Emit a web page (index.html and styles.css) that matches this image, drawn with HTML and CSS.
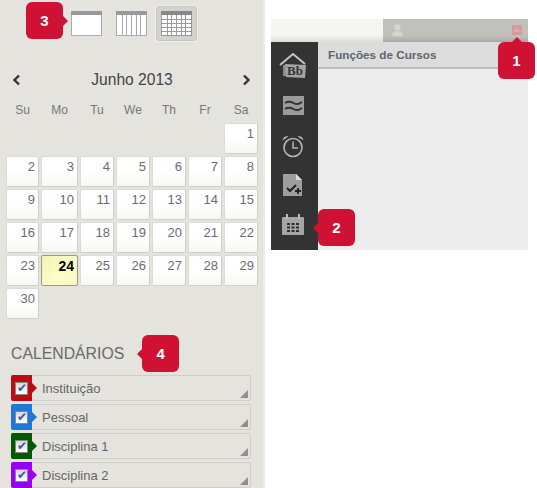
FILE: index.html
```html
<!DOCTYPE html>
<html lang="en">
<head>
    <meta charset="UTF-8">
    <title>Calendário</title>
    <link rel="stylesheet" href="styles.css">
</head>
<body>
    <aside class="panel">
        <div class="views">
            <span class="callout callout-3">3</span>
            <button class="view">
                <svg width="31" height="25" viewBox="0 0 31 25"><rect x=".5" y=".5" width="30" height="24" fill="#fff" stroke="#aaa"/><rect width="31" height="4" fill="#999"/></svg>
            </button>
            <button class="view">
                <svg width="31" height="25" viewBox="0 0 31 25"><rect x=".5" y=".5" width="30" height="24" fill="#fff" stroke="#aaa"/><rect width="31" height="4" fill="#999"/><path d="M6.500 4v20M10.500 4v20M15.500 4v20M20.500 4v20M24.500 4v20" stroke="#aaa" fill="none"/></svg>
            </button>
            <button class="view view-active">
                <svg width="31" height="25" viewBox="0 0 31 25"><rect x=".5" y=".5" width="30" height="24" fill="#fff" stroke="#999"/><rect width="31" height="4" fill="#888"/><path d="M6.500 4v20M10.500 4v20M15.500 4v20M20.500 4v20M24.500 4v20M0 8.500h31M0 12.500h31M0 16.500h31M0 20.500h31" stroke="#999" fill="none"/></svg>
            </button>
        </div>

        <div class="month-nav">
            <svg width="9" height="12" viewBox="0 0 9 12"><path d="M7 1.500 2.500 6 7 10.500" fill="none" stroke="#333" stroke-width="2.400"/></svg>
            <span class="month-title">Junho 2013</span>
            <svg width="9" height="12" viewBox="0 0 9 12"><path d="M2 1.500 6.500 6 2 10.500" fill="none" stroke="#333" stroke-width="2.400"/></svg>
        </div>

        <div class="weekdays">
            <span>Su</span><span>Mo</span><span>Tu</span><span>We</span><span>Th</span><span>Fr</span><span>Sa</span>
        </div>

        <div class="month-grid">
            <div class="day day-first">1</div>
            <div class="day">2</div><div class="day">3</div><div class="day">4</div><div class="day">5</div><div class="day">6</div><div class="day">7</div><div class="day">8</div>
            <div class="day">9</div><div class="day">10</div><div class="day">11</div><div class="day">12</div><div class="day">13</div><div class="day">14</div><div class="day">15</div>
            <div class="day">16</div><div class="day">17</div><div class="day">18</div><div class="day">19</div><div class="day">20</div><div class="day">21</div><div class="day">22</div>
            <div class="day">23</div><div class="day day-today">24</div><div class="day">25</div><div class="day">26</div><div class="day">27</div><div class="day">28</div><div class="day">29</div>
            <div class="day">30</div>
        </div>

        <div class="cal-heading">
            <h2>CALENDÁRIOS</h2>
            <span class="callout callout-4">4</span>
        </div>

        <ul class="cal-list">
            <li class="cal-item"><span class="swatch swatch-red"><span class="check">✔</span></span>Instituição</li>
            <li class="cal-item"><span class="swatch swatch-blue"><span class="check">✔</span></span>Pessoal</li>
            <li class="cal-item"><span class="swatch swatch-green"><span class="check">✔</span></span>Disciplina 1</li>
            <li class="cal-item"><span class="swatch swatch-purple"><span class="check">✔</span></span>Disciplina 2</li>
        </ul>
    </aside>

    <main class="app">
        <div class="topbar">
            <div class="topbar-left"></div>
            <div class="topbar-right">
                <svg width="13" height="14" viewBox="0 0 14 16"><circle cx="7" cy="5" r="3.600" fill="#d6d5d0"/><path d="M1 15v-2.500C1 10.500 4 9.500 7 9.500s6 1 6 3V15z" fill="#d6d5d0"/></svg>
                <span class="close-box"></span>
            </div>
        </div>
        <div class="app-body">
            <nav class="rail">
                <svg width="28" height="26" viewBox="0 0 28 26"><path d="M1 12 14 1l12 10" fill="none" stroke="#c4c4c4" stroke-width="2"/><path d="M4 12v11h3V12z" fill="#8a8a8a"/><path d="M6 11l21 1-1 13-19-1z" fill="#a5a5a5"/><text x="8" y="22" class="bb-text">Bb</text></svg>
                <svg width="21" height="19" viewBox="0 0 21 19"><rect width="21" height="19" fill="#9b9b9b"/><path d="M2 7c3-2 5-2 8.500 0s5.500 1 8.500-1M2 13c3-2 5-2 8.500 0s5.500 1 8.500-1" fill="none" stroke="#333" stroke-width="2"/></svg>
                <svg class="rail-alarm" width="24" height="26" viewBox="0 0 24 26"><circle cx="12" cy="15.500" r="9" fill="#333" stroke="#b5b5b5" stroke-width="1.600"/><path d="M12 9.500v6.500h5" fill="none" stroke="#b5b5b5" stroke-width="1.500"/><path d="M1.500 8.500C2 5 5 3.500 7.500 4.500zM22.500 8.500C22 5 19 3.500 16.500 4.500z" fill="#b5b5b5"/></svg>
                <svg width="20" height="24" viewBox="0 0 20 24"><path d="M0 1h13l6 6v16H0z" fill="#9e9e9e"/><path d="M13 1v6h6z" fill="#ddd"/><path d="M4 15l3 3 6-6" fill="none" stroke="#222" stroke-width="2"/><path d="M15 15v6M12 18h6" stroke="#222" stroke-width="1.800"/></svg>
                <svg width="22" height="21" viewBox="0 0 22 21"><rect y="3" width="22" height="18" rx="1" fill="#a5a5a5"/><path d="M5 0v5M17 0v5" stroke="#bbb" stroke-width="2"/><path d="M5 9h3v2H5zM9.500 9h3v2h-3zM14 9h3v2h-3zM5 12.500h3v2H5zM9.500 12.500h3v2h-3zM14 12.500h3v2h-3zM5 16h3v2H5zM9.500 16h3v2h-3zM14 16h3v2h-3z" fill="#2e2e2e"/></svg>
            </nav>
            <section class="content">
                <header class="content-head">Funções de Cursos</header>
            </section>
        </div>
        <span class="callout callout-1">1</span>
        <span class="callout callout-2">2</span>
    </main>
</body>
</html>
```

FILE: styles.css
```css
* {
    box-sizing: border-box;
}

html,
body {
    height: 488px;
    overflow: hidden;
}

body {
    margin: 0;
    display: flex;
    font-family: "Liberation Sans", Arial, sans-serif;
    background-color: #fff;
    color: #666;
}

.panel {
    position: relative;
    width: 265px;
    height: 488px;
    background-color: #e4e3de;
    border-right: 2px solid #ecebe7;
    padding: 6px 0 0 6px;
}

.views {
    display: flex;
    gap: 4px;
    height: 35px;
    margin-left: 60px;
}

.view {
    width: 41px;
    height: 35px;
    padding: 0;
    border: 0;
    background: none;
    display: flex;
    align-items: center;
    justify-content: center;
}

.view-active {
    background-color: #d3d2cc;
    border: 1px solid #c8c7c1;
    border-radius: 3px;
    box-shadow: 0 0 0 1px #eeede9;
}

.month-nav {
    display: flex;
    align-items: center;
    justify-content: space-between;
    width: 246px;
    height: 20px;
    margin-top: 29px;
    padding: 0 1px 0 6px;
}

.month-title {
    font-size: 15.6px;
    color: #444;
    margin-left: 1px;
}

.weekdays {
    display: grid;
    grid-template-columns: 33px 37px repeat(5, 34px);
    gap: 2px;
    margin-top: 12px;
    font-size: 12px;
    line-height: 16px;
    color: #777;
    text-align: center;
}

.month-grid {
    display: grid;
    grid-template-columns: 33px 37px repeat(5, 34px);
    grid-auto-rows: 31px;
    gap: 2px;
    margin-top: 5px;
}

.day {
    background: linear-gradient(#fff 50%, #f6f6f3);
    border: 1px solid #cfcec8;
    border-top-color: #dcdbd6;
    border-left-color: #dcdbd6;
    border-radius: 2px;
    padding: 2px 3px 0 0;
    font-size: 13px;
    line-height: 16px;
    text-align: right;
    color: #6c6a72;
}

.day-first {
    grid-column: 7;
}

.day-today {
    background: linear-gradient(135deg, #f2f2b8, #fdfdc8 60%, #f8f8c0);
    border-color: #9a9a80;
    font-size: 14px;
    font-weight: bold;
    color: #000;
}

.cal-heading {
    display: flex;
    align-items: center;
    height: 20px;
    margin: 24px 0 0 5px;
}

.cal-heading h2 {
    margin: 0;
    padding-top: 1px;
    font-size: 15.8px;
    font-weight: normal;
    color: #6a6a6a;
}

.cal-list {
    list-style: none;
    margin: 12px 0 0 5px;
    padding: 0;
    width: 240px;
}

.cal-item {
    position: relative;
    display: flex;
    align-items: center;
    height: 26px;
    margin-bottom: 3px;
    border: 1px solid #cfcec8;
    border-radius: 2px;
    font-size: 13px;
    color: #666;
}

/* corner grip on each calendar row */
.cal-item::after {
    content: "";
    position: absolute;
    right: 2px;
    bottom: 2px;
    border-style: solid;
    border-width: 0 0 8px 8px;
    border-color: transparent transparent #8f8f8b transparent;
}

.swatch {
    position: relative;
    display: flex;
    align-items: center;
    justify-content: center;
    width: 21px;
    height: 26px;
    margin: 0 10px 0 -1px;
    border-radius: 2px 0 0 2px;
}

.swatch::after {
    content: "";
    position: absolute;
    left: 21px;
    top: 8px;
    border-style: solid;
    border-width: 5px 0 5px 5px;
    border-color: transparent;
    border-left-color: inherit;
}

.swatch-red { background-color: #b90e14; border-color: #b90e14; }
.swatch-blue { background-color: #1f78d8; border-color: #1f78d8; }
.swatch-green { background-color: #005a00; border-color: #005a00; }
.swatch-purple { background-color: #9a00f0; border-color: #9a00f0; }

.check {
    width: 13px;
    height: 13px;
    background: linear-gradient(#d8d8d8, #fff);
    border: 1px solid #888;
    font-size: 12px;
    line-height: 11px;
    text-align: center;
    color: #46549c;
}

.app {
    position: relative;
    width: 257px;
    height: 231px;
    margin: 19px 0 0 6px;
}

.topbar {
    display: flex;
    height: 23px;
}

.topbar-left {
    width: 112px;
    background: linear-gradient(#f6f5f1 70%, #dddcd8);
}

.topbar-right {
    flex: 1;
    display: flex;
    align-items: center;
    justify-content: space-between;
    padding: 0 6px 2px 8px;
    background: linear-gradient(#c1c0bb 75%, #a8a7a3);
}

.close-box {
    position: relative;
    width: 10px;
    height: 10px;
    background-color: #d59a9c;
}

.close-box::after {
    content: "";
    position: absolute;
    left: 1px;
    top: 2px;
    border-style: solid;
    border-width: 0 4px 5px 4px;
    border-color: transparent transparent #cfb0b0 transparent;
}

.app-body {
    display: flex;
    height: 208px;
}

.rail {
    width: 47px;
    flex: none;
    background-color: #333;
    display: flex;
    flex-direction: column;
    align-items: center;
    gap: 17px;
    padding: 11px 3px 0 0;
}

.rail-alarm {
    margin-bottom: -2px;
}

.bb-text {
    font-family: "Liberation Serif", serif;
    font-size: 13px;
    font-weight: bold;
    fill: #333;
}

.content {
    flex: 1;
    background-color: #ececec;
}

.content-head {
    height: 27px;
    background-color: #dcdcdc;
    border-bottom: 2px solid #bdbdbd;
    padding: 5px 0 0 10px;
    font-size: 11.7px;
    font-weight: bold;
    line-height: 16px;
    color: #5d6570;
}

.callout {
    display: flex;
    align-items: center;
    justify-content: center;
    width: 37px;
    height: 37px;
    background-color: #cf1233;
    border-radius: 6px;
    font-size: 15px;
    font-weight: bold;
    color: #fff;
}

.callout::after {
    content: "";
    position: absolute;
    border-style: solid;
    border-color: transparent;
}

.callout-1,
.callout-2,
.callout-3 {
    position: absolute;
}

.callout-3 {
    left: 26px;
    top: 2px;
}

.callout-3::after {
    left: 37px;
    top: 14px;
    border-width: 5px 0 5px 5px;
    border-left-color: #cf1233;
}

.callout-4 {
    position: relative;
    margin-left: 18px;
    flex: none;
}

.callout-4::after {
    left: -5px;
    top: 14px;
    border-width: 5px 5px 5px 0;
    border-right-color: #cf1233;
}

.callout-1 {
    left: 227px;
    top: 23px;
}

.callout-1::after {
    left: 14px;
    top: -5px;
    border-width: 0 5px 5px 5px;
    border-bottom-color: #cf1233;
}

.callout-2 {
    left: 47px;
    top: 190px;
}

.callout-2::after {
    left: -5px;
    top: 14px;
    border-width: 5px 5px 5px 0;
    border-right-color: #cf1233;
}
```
